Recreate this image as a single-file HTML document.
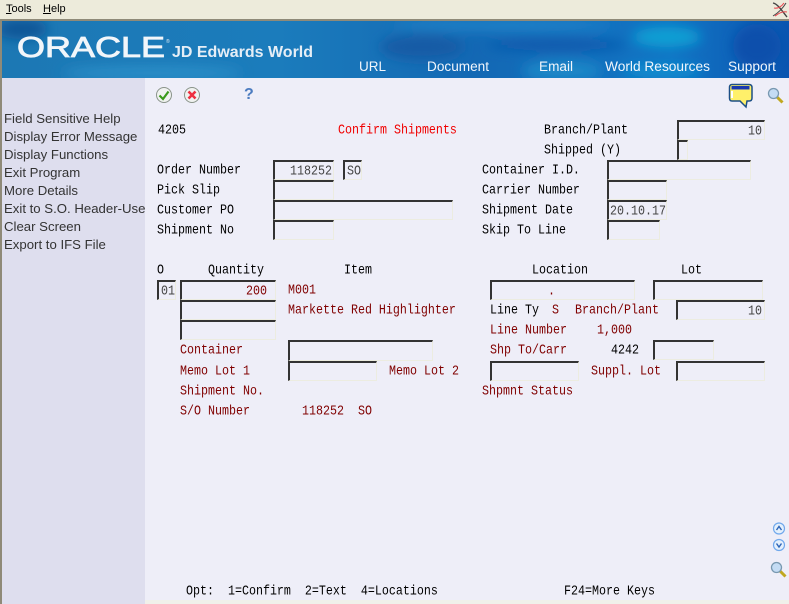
<!DOCTYPE html>
<html><head><meta charset="utf-8"><style>
html,body{margin:0;padding:0}
body{width:789px;height:604px;position:relative;overflow:hidden;background:#eeeef8}
.t,.s,.m,.f{position:absolute}
.t{font:11.67px/14px "Liberation Mono",monospace;white-space:pre;color:#000;transform:scaleY(1.15)}
.r{color:#800000}
.s{font:13.2px/16px "Liberation Sans",sans-serif;color:#333;left:4px;white-space:pre}
.m{font:11px/13px "Liberation Sans",sans-serif;color:#000;top:3px}
.f{box-sizing:border-box;border-top:2px solid #333;border-left:2px solid #333;border-right:1px solid #ecece0;border-bottom:1px solid #ecece0;font:11.67px/16px "Liberation Mono",monospace;color:#444;white-space:pre;padding:1px 2px 0 1px;overflow:hidden}
.f span{display:inline-block;transform:scaleY(1.15)}
.ra{text-align:right}
u{text-decoration:underline}
</style></head><body>
<div style="position:absolute;left:0;top:0;width:789px;height:19px;background:#edebdb"></div>
<div style="position:absolute;left:0;top:19px;width:789px;height:2px;background:#8f8a78"></div>
<div style="position:absolute;left:0;top:21px;width:2px;height:583px;background:#8f8a78"></div>
<div class="m" style="left:6px"><u>T</u>ools</div>
<div class="m" style="left:43px"><u>H</u>elp</div>
<svg style="position:absolute;left:771px;top:1px" width="18" height="18" viewBox="0 0 18 18"><path d="M2 2C7 3 11 10 16 16" stroke="#444" stroke-width="1.4" fill="none"/><path d="M15 2C12 7 7 12 2 15" stroke="#444" stroke-width="1" fill="none"/><path d="M3 7C7 8 11 5 13 2M4 15C8 12 12 10 16 11" stroke="#e84850" stroke-width="1.1" fill="none"/></svg>

<svg style="position:absolute;left:2px;top:21px" width="787" height="60" viewBox="0 0 787 60">
<defs>
<linearGradient id="g" x1="0" x2="1" y1="0" y2="0"><stop offset="0" stop-color="#1c78b4"/><stop offset=".35" stop-color="#1b7cbc"/><stop offset=".6" stop-color="#1368b4"/><stop offset=".85" stop-color="#1274c4"/><stop offset="1" stop-color="#0a55b0"/></linearGradient>
<filter id="b" x="-30%" y="-50%" width="160%" height="200%"><feGaussianBlur stdDeviation="6"/></filter>
</defs>
<rect width="787" height="57" fill="url(#g)"/>
<g filter="url(#b)">
<ellipse cx="20" cy="8" rx="26" ry="10" fill="#0f5596"/>
<ellipse cx="150" cy="52" rx="90" ry="7" fill="#2a8ec8"/>
<ellipse cx="420" cy="26" rx="42" ry="13" fill="#125ba6"/>
<ellipse cx="555" cy="24" rx="70" ry="6" fill="#0f58ac"/>
<ellipse cx="500" cy="4" rx="110" ry="5" fill="#2187cc"/>
<ellipse cx="560" cy="50" rx="40" ry="10" fill="#1a88c8"/>
<ellipse cx="665" cy="16" rx="34" ry="10" fill="#0aa0d4"/>
<ellipse cx="660" cy="50" rx="40" ry="7" fill="#0f8fd0"/>
<ellipse cx="755" cy="25" rx="24" ry="22" fill="#0850ac"/>
</g>
<text x="15" y="36" font-family="Liberation Sans" font-size="28.5" fill="#f2f6fa" textLength="148" lengthAdjust="spacingAndGlyphs" stroke="#f2f6fa" stroke-width=".8">ORACLE</text>
<text x="164" y="22" font-family="Liberation Sans" font-size="5" fill="#dfeaf4">®</text>
<text x="170" y="36" font-family="Liberation Sans" font-size="16" font-weight="bold" fill="#e6eef6" textLength="141" lengthAdjust="spacingAndGlyphs">JD Edwards World</text>
<g font-family="Liberation Sans" font-size="13.5" fill="#f2f6fc">
<text x="357" y="50" textLength="27" lengthAdjust="spacingAndGlyphs">URL</text>
<text x="425" y="50" textLength="62" lengthAdjust="spacingAndGlyphs">Document</text>
<text x="537" y="50" textLength="34" lengthAdjust="spacingAndGlyphs">Email</text>
<text x="603" y="50" textLength="105" lengthAdjust="spacingAndGlyphs">World Resources</text>
<text x="726" y="50" textLength="48" lengthAdjust="spacingAndGlyphs">Support</text>
</g>
</svg>
<div style="position:absolute;left:2px;top:78px;width:143px;height:526px;background:#dedeee"></div>
<div style="position:absolute;left:145px;top:78px;width:644px;height:522px;background:#eeeef8"></div>
<div style="position:absolute;left:145px;top:600px;width:644px;height:4px;background:#f0f0ea"></div>

<div class="s" style="top:111px">Field Sensitive Help</div>
<div class="s" style="top:129px">Display Error Message</div>
<div class="s" style="top:147px">Display Functions</div>
<div class="s" style="top:165px">Exit Program</div>
<div class="s" style="top:183px">More Details</div>
<div class="s" style="top:201px">Exit to S.O. Header-Use</div>
<div class="s" style="top:219px">Clear Screen</div>
<div class="s" style="top:237px">Export to IFS File</div>

<svg style="position:absolute;left:155px;top:86px" width="18" height="18" viewBox="0 0 18 18"><circle cx="9" cy="9" r="7.5" fill="#f0f2f0" stroke="#8a948a"/><path d="M4.5 9.5L8 13L13.5 5.5" stroke="#3a9a1a" stroke-width="2.2" fill="none"/></svg>
<svg style="position:absolute;left:183px;top:86px" width="18" height="18" viewBox="0 0 18 18"><circle cx="9" cy="9" r="7.5" fill="#f0f2f0" stroke="#8a948a"/><path d="M5.5 5.5L12.5 12.5M12.5 5.5L5.5 12.5" stroke="#ee3040" stroke-width="2.6" fill="none"/></svg>
<div style="position:absolute;left:244px;top:86px;font:bold 16px/18px 'Liberation Sans',sans-serif;color:#4c7cc0">?</div>
<svg style="position:absolute;left:728px;top:83px" width="26" height="26" viewBox="0 0 26 26"><path d="M4 1.500H21Q24 1.500 24 4.500V15Q24 18 21 18H19L18 24L12 18H4Q1.500 18 1.500 15V4.500Q1.500 1.500 4 1.500Z" fill="#fff06a" stroke="#1c4f86" stroke-width="1.500"/><rect x="3.500" y="3" width="18" height="3.500" fill="#1838b0"/><path d="M4 8V15" stroke="#fff" stroke-width="2"/></svg>
<svg style="position:absolute;left:767px;top:87px" width="17" height="17" viewBox="0 0 17 17"><path d="M10 10L15.500 15.500" stroke="#c0a820" stroke-width="3"/><circle cx="6.500" cy="6.500" r="5" fill="#c4dcf4" stroke="#7898b0" stroke-width="1.300"/></svg>

<div class="t" style="left:158px;top:123px">4205</div>
<div class="t" style="left:338px;top:123px;color:#f00000">Confirm Shipments</div>
<div class="t" style="left:544px;top:123px">Branch/Plant</div>
<div class="t" style="left:544px;top:143px">Shipped (Y)</div>
<div class="t" style="left:157px;top:163px">Order Number</div>
<div class="t" style="left:157px;top:183px">Pick Slip</div>
<div class="t" style="left:157px;top:203px">Customer PO</div>
<div class="t" style="left:157px;top:223px">Shipment No</div>
<div class="t" style="left:482px;top:163px">Container I.D.</div>
<div class="t" style="left:482px;top:183px">Carrier Number</div>
<div class="t" style="left:482px;top:203px">Shipment Date</div>
<div class="t" style="left:482px;top:223px">Skip To Line</div>

<div class="f ra" style="left:677px;top:120px;width:88px;height:20px"><span>10</span></div>
<div class="f" style="left:677px;top:140px;width:11px;height:20px"></div>
<div class="f ra" style="left:273px;top:160px;width:61px;height:20px;padding-right:1px"><span>118252</span></div>
<div class="f" style="left:343px;top:160px;width:19px;height:20px;padding-left:2px"><span>SO</span></div>
<div class="f" style="left:273px;top:180px;width:61px;height:20px"></div>
<div class="f" style="left:273px;top:200px;width:180px;height:20px"></div>
<div class="f" style="left:273px;top:220px;width:61px;height:20px"></div>
<div class="f" style="left:607px;top:160px;width:144px;height:20px"></div>
<div class="f" style="left:607px;top:180px;width:60px;height:20px"></div>
<div class="f" style="left:607px;top:200px;width:60px;height:20px"><span>20.10.17</span></div>
<div class="f" style="left:607px;top:220px;width:53px;height:20px"></div>

<div class="t" style="left:157px;top:263px">O</div>
<div class="t" style="left:208px;top:263px">Quantity</div>
<div class="t" style="left:344px;top:263px">Item</div>
<div class="t" style="left:532px;top:263px">Location</div>
<div class="t" style="left:681px;top:263px">Lot</div>

<div class="f" style="left:157px;top:280px;width:19px;height:20px;padding-left:2px"><span>01</span></div>
<div class="f ra" style="left:180px;top:280px;width:96px;height:20px;color:#800000;padding-right:8px"><span>200</span></div>
<div class="f" style="left:180px;top:300px;width:96px;height:20px"></div>
<div class="f" style="left:180px;top:320px;width:96px;height:20px"></div>
<div class="f" style="left:288px;top:340px;width:145px;height:21px"></div>
<div class="f" style="left:288px;top:361px;width:89px;height:20px"></div>
<div class="f" style="left:490px;top:280px;width:145px;height:20px;text-align:center;color:#800000;padding-right:24px"><span>.</span></div>
<div class="f" style="left:653px;top:280px;width:110px;height:20px"></div>
<div class="f ra" style="left:676px;top:300px;width:89px;height:20px"><span>10</span></div>
<div class="f" style="left:653px;top:340px;width:61px;height:20px"></div>
<div class="f" style="left:490px;top:361px;width:89px;height:20px"></div>
<div class="f" style="left:676px;top:361px;width:89px;height:20px"></div>

<div class="t r" style="left:288px;top:283px">M001</div>
<div class="t r" style="left:288px;top:303px">Markette Red Highlighter</div>
<div class="t r" style="left:180px;top:343px">Container</div>
<div class="t r" style="left:180px;top:364px">Memo Lot 1</div>
<div class="t r" style="left:389px;top:364px">Memo Lot 2</div>
<div class="t r" style="left:180px;top:384px">Shipment No.</div>
<div class="t r" style="left:180px;top:404px">S/O Number</div>
<div class="t r" style="left:302px;top:404px">118252</div>
<div class="t r" style="left:358px;top:404px">SO</div>
<div class="t" style="left:490px;top:303px">Line Ty</div>
<div class="t r" style="left:552px;top:303px">S</div>
<div class="t r" style="left:575px;top:303px">Branch/Plant</div>
<div class="t r" style="left:490px;top:323px">Line Number</div>
<div class="t r" style="left:597px;top:323px">1,000</div>
<div class="t r" style="left:490px;top:343px">Shp To/Carr</div>
<div class="t" style="left:611px;top:343px">4242</div>
<div class="t r" style="left:591px;top:364px">Suppl. Lot</div>
<div class="t r" style="left:482px;top:384px">Shpmnt Status</div>

<svg style="position:absolute;left:771px;top:521px" width="16" height="16" viewBox="0 0 16 16"><circle cx="8" cy="7.500" r="5.500" fill="#e4f0fc" stroke="#70a8ec" stroke-width="1.200"/><path d="M5.500 9L8 5.500L10.500 9" stroke="#2c64b8" stroke-width="1.400" fill="none"/></svg>
<svg style="position:absolute;left:771px;top:537px" width="16" height="16" viewBox="0 0 16 16"><circle cx="8" cy="8" r="5.500" fill="#e4f0fc" stroke="#70a8ec" stroke-width="1.200"/><path d="M5.500 6.500L8 10L10.500 6.500" stroke="#2c64b8" stroke-width="1.400" fill="none"/></svg>
<svg style="position:absolute;left:770px;top:561px" width="17" height="17" viewBox="0 0 17 17"><path d="M10 10L15.500 15.500" stroke="#c0a820" stroke-width="3"/><circle cx="6.500" cy="6.500" r="5" fill="#c4dcf4" stroke="#7898b0" stroke-width="1.300"/></svg>

<div class="t" style="left:186px;top:584px">Opt:  1=Confirm  2=Text  4=Locations</div>
<div class="t" style="left:564px;top:584px">F24=More Keys</div>
</body></html>
